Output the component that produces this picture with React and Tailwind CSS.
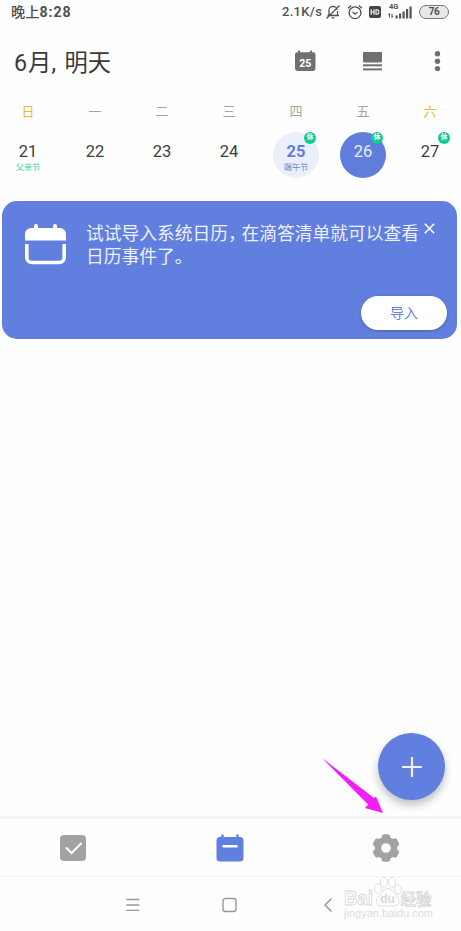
import React from "react";

const FONT = "font-['Roboto','Noto_Sans_CJK_SC',sans-serif]";

const DAYS = [
  { week: "日", date: "21", note: "父亲节", weekend: true },
  { week: "一", date: "22" },
  { week: "二", date: "23" },
  { week: "三", date: "24" },
  { week: "四", date: "25", note: "端午节", today: true, off: true },
  { week: "五", date: "26", selected: true, off: true },
  { week: "六", date: "27", weekend: true, off: true },
];

function StatusBar() {
  return (
    <div className="flex h-6 items-center justify-between pl-[11px] pr-[12px] text-[#505050]">
      <span className="whitespace-nowrap text-[14.2px] leading-6 font-medium">
        晚上<span className="tracking-[0.95px] font-bold">8:28</span>
      </span>
      <div className="flex items-center">
        <span className="w-[43px] whitespace-nowrap text-[13px] leading-6 font-medium tracking-[0.3px]">2.1K/s</span>
        {/* muted bell */}
        <svg className="h-4 w-4" viewBox="0 0 16 16" fill="none" stroke="currentColor" strokeWidth="1.3">
          <path d="M2.5 11.5H14M4 11V7a4 4 0 0 1 8-1.2M12.5 7v4.3M1.5 14.5l13-13M6.5 13.8h3M7 2.6h2" />
        </svg>
        <svg className="ml-[6px] h-4 w-4" viewBox="0 0 16 16" fill="none" stroke="currentColor" strokeWidth="1.3">
          <circle cx="8" cy="8.7" r="5.9" />
          <path d="M1 4.2 4.2 1.4M15 4.2l-3.2-2.8M5.5 8 8 10.2 10.5 8" />
        </svg>
        <svg className="ml-[6px] h-3 w-3" viewBox="0 0 12 12">
          <rect width="12" height="12" rx="2" fill="#444" />
          <path d="M2.2 3.2v5.6M5 3.2v5.6M2.2 6H5M7 3.8h1.2a1.6 1.6 0 0 1 1.6 1.7v1a1.6 1.6 0 0 1-1.6 1.7H7z" fill="none" stroke="#fff" strokeWidth="1.1" />
        </svg>
        <div className="relative ml-[7px] h-4 w-6">
          <span className="absolute left-[1px] -top-[1px] text-[7.5px] leading-[8px] font-bold">4G</span>
          <svg className="absolute inset-0 h-4 w-6" viewBox="0 0 24 16" fill="#555">
            <path d="M1.5 9.5v4M.3 11l1.2-1.500M4 9.5v4L5.200 12" stroke="#555" fill="none" />
            <rect x="7.5" y="11.500" width="2.2" height="3" />
            <rect x="11" y="9.500" width="2.2" height="5" />
            <rect x="14.5" y="7.500" width="2.2" height="7" />
            <rect x="18" y="5" width="2.2" height="9.500" />
            <rect x="21.5" y="2.500" width="2.2" height="12" />
          </svg>
        </div>
        <span className="ml-[7px] flex h-[14px] w-[30px] items-center justify-center rounded-full border-[1.5px] border-[#777] bg-[#e8e8e8] text-[10px] leading-none font-bold tracking-[-0.5px]">
          76
        </span>
      </div>
    </div>
  );
}

function Header() {
  return (
    <div className="flex h-[74px] items-center justify-between pl-[14px] pr-[20px] text-[#707070]">
      <h1 className="mt-[4px] whitespace-nowrap text-[23.3px] leading-[30px] text-[#3a3a3a]">
        6<span className="ml-[1px]">月,</span><span className="ml-[8.5px]">明天</span>
      </h1>
      <div className="flex items-center">
        <svg className="h-[22px] w-[22px]" viewBox="0 0 22 22" fill="currentColor">
          <path d="M4 .5h2v1.7h10V.5h2v1.7h1.300a2.200 2.200 0 0 1 2.200 2.200v14.200a2.400 2.400 0 0 1-2.400 2.400H3.400A2.400 2.400 0 0 1 1 18.600V4.400a2.200 2.200 0 0 1 2.200-2.200H4z" />
          <text x="11.3" y="16.6" textAnchor="middle" fill="#fff" fontFamily="Roboto" fontWeight="700" fontSize="10.5">25</text>
        </svg>
        <svg className="ml-[46px] h-5 w-5" viewBox="0 0 20 20" fill="currentColor">
          <rect x="1" y="1" width="19" height="10.5" rx="1" />
          <rect x="1" y="13.3" width="19" height="2" />
          <rect x="1" y="17.4" width="19" height="2" />
        </svg>
        <svg className="ml-[52px] h-[22px] w-[7px]" viewBox="0 0 7 22" fill="currentColor">
          <circle cx="3.5" cy="3.8" r="2.7" />
          <circle cx="3.5" cy="11.2" r="2.7" />
          <circle cx="3.5" cy="18.6" r="2.7" />
        </svg>
      </div>
    </div>
  );
}

function Day({ day }) {
  let circle = "text-[#3d3d3d]";
  if (day.today) circle = "bg-[#eaeffa] text-[#5f7edb]";
  if (day.selected) circle = "bg-[#5f7edb] text-[#e9eefb]";
  return (
    <div className="flex flex-col items-center">
      <span className={`h-[27px] text-[13px] leading-[27px] ${day.weekend ? "text-[#f5b921]" : "text-[#a5a5a5]"}`}>
        {day.week}
      </span>
      <div className={`relative mt-[7px] h-[46px] w-[46px] rounded-full text-center ${circle}`}>
        <div className={`pt-[9px] text-[16.5px] leading-[21px] ${day.today ? "font-bold" : ""}`}>{day.date}</div>
        {day.note && (
          <div className={`whitespace-nowrap text-[8.2px] leading-[10px] ${day.today ? "text-[#6682d4]" : "text-[#36cfa5]"}`}>
            {day.note}
          </div>
        )}
        {day.off && (
          <span className="absolute -top-[0.5px] left-[31px] flex h-3 w-3 items-center justify-center rounded-full bg-[#0ecb91] text-[7px] leading-none font-bold text-white">
            休
          </span>
        )}
      </div>
    </div>
  );
}

function ImportCard() {
  return (
    <div className="mr-[4px] ml-[2px] flex h-[138px] shrink-0 flex-col rounded-[15px] bg-[#617fde] text-[#edf1fc]">
      <div className="flex pl-[22px] pt-[22px]">
        <svg className="h-[43px] w-[43px]" viewBox="0 0 43 43" fill="#fff">
          <path d="M1 17.5V11a6 6 0 0 1 6-6h3V3a2 2 0 0 1 4 0v2h15V3a2 2 0 0 1 4 0v2h3a6 6 0 0 1 6 6v6.5z" />
          <path d="M2.8 21v13.5a5 5 0 0 0 5 5h27.4a5 5 0 0 0 5-5V21" fill="none" stroke="#fff" strokeWidth="3.6" />
        </svg>
        <p className="ml-[19px] whitespace-nowrap text-[17.75px] leading-[23px]">
          试试导入系统日历<span className="tracking-[-4.25px]">，</span>在滴答清单就可以查看
          <br />
          日历事件了。
        </p>
        <svg className="ml-[5px] h-[11px] w-[11px]" viewBox="0 0 11 11" fill="none" stroke="#fff" strokeWidth="1.6">
          <path d="m.8.8 9.4 9.4M10.2.8.8 10.2" />
        </svg>
      </div>
      <button className="mt-auto mr-[10px] mb-[9px] h-[34px] w-[86px] self-end rounded-full bg-white text-[14px] text-[#6682d4] shadow-[0_1px_3px_rgba(0,0,0,0.25)]">
        导入
      </button>
    </div>
  );
}

function TabBar() {
  return (
    <div className="flex h-[60px] shrink-0 items-center border-t-[3px] border-[#f5f5f5] pl-[60px]">
      <svg className="h-[26px] w-[26px]" viewBox="0 0 26 26">
        <rect width="26" height="26" rx="4" fill="#a2a2a2" />
        <path d="m6.5 13 5 5L21 8.5" fill="none" stroke="#fff" strokeWidth="2" strokeLinecap="round" />
      </svg>
      <svg className="ml-[129.5px] h-[28px] w-[28px]" viewBox="0 0 28 28">
        <path d="M5.3 1.5a1.2 1.2 0 0 1 2.4 0V3h12.6V1.5a1.2 1.2 0 0 1 2.4 0V3H24a3.5 3.5 0 0 1 3.5 3.5V24a3.5 3.5 0 0 1-3.5 3.5H4A3.5 3.5 0 0 1 .5 24V6.5A3.5 3.5 0 0 1 4 3h1.3z" fill="#617fde" />
        <path d="M7.5 12.3h13" stroke="#fff" strokeWidth="2.4" strokeLinecap="round" />
      </svg>
      <svg className="ml-[128px] h-[28px] w-[28px]" viewBox="0 0 28 28" fill="#a2a2a2">
        <circle cx="14" cy="14" r="11.2" />
        <rect x="9.7" y="0.3" width="8.6" height="27.4" rx="2.5" />
        <rect x="9.7" y="0.3" width="8.6" height="27.4" rx="2.5" transform="rotate(60 14 14)" />
        <rect x="9.7" y="0.3" width="8.6" height="27.4" rx="2.5" transform="rotate(120 14 14)" />
        <circle cx="14" cy="14" r="4.8" fill="#fff" />
      </svg>
    </div>
  );
}

function Watermark() {
  return (
    <svg className="absolute left-[342px] top-[-1px] h-[48px] w-[96px]" viewBox="0 0 96 48" fill="#fff" stroke="#d6d6d6" strokeWidth="0.8">
      <text x="2" y="29" fontFamily="Liberation Sans" fontWeight="700" fontSize="21" textLength="29" lengthAdjust="spacingAndGlyphs">Bai</text>
      <ellipse cx="36" cy="12.5" rx="3.5" ry="4.7" />
      <ellipse cx="41.8" cy="6.3" rx="3.5" ry="4.9" />
      <ellipse cx="50" cy="6.3" rx="3.5" ry="4.9" />
      <ellipse cx="56" cy="13.5" rx="3.5" ry="4.6" />
      <path d="M46 12.5c4 0 5 4 8 7 5 4 3.5 10.5-2.5 10.5-3 0-8-.5-11 0-7 .5-8-6-3.5-10 3.5-3.5 5-7.5 9-7.5z" />
      <text x="45.5" y="27" textAnchor="middle" fontFamily="Liberation Sans" fontWeight="700" fontSize="12" fill="#d9d9d9" stroke="none">du</text>
      <text x="58.5" y="29" fontFamily="Noto Sans CJK SC" fontWeight="500" fontSize="15.5" textLength="31" lengthAdjust="spacingAndGlyphs">经验</text>
      <text x="2" y="40.5" fontFamily="Liberation Sans" fontSize="10" fill="#dcdcdc" stroke="none" textLength="89" lengthAdjust="spacingAndGlyphs">jingyan.baidu.com</text>
    </svg>
  );
}

function SystemNav() {
  return (
    <div className="relative flex h-[55px] shrink-0 items-center border-t border-[#f3f3f3] pl-[125px] text-[#999]">
      <svg className="mt-[1px] h-4 w-4" viewBox="0 0 16 16" stroke="currentColor" strokeWidth="1.3">
        <path d="M1.3 2.5h13M1.3 8h13M1.3 13.3h13" />
      </svg>
      <svg className="mt-[1px] ml-[80px] h-4 w-4" viewBox="0 0 16 16" fill="none" stroke="currentColor" strokeWidth="1.4">
        <rect x="2" y="1.5" width="13" height="13" rx="2.5" />
      </svg>
      <svg className="mt-[1px] ml-[85px] h-4 w-3" viewBox="0 0 12 16" fill="none" stroke="currentColor" strokeWidth="1.5">
        <path d="M9.5 1.5 3 8l6.5 6.5" />
      </svg>
      <Watermark />
    </div>
  );
}

export default function App() {
  return (
    <div className={`relative flex h-[931px] w-[461px] flex-col overflow-hidden bg-[#fefefe] ${FONT}`}>
      <StatusBar />
      <Header />
      <div className="-ml-[5.5px] grid h-[103px] w-[469px] shrink-0 grid-cols-7">
        {DAYS.map((d) => (
          <Day key={d.date} day={d} />
        ))}
      </div>
      <ImportCard />
      <main className="flex-1" />
      <TabBar />
      <SystemNav />

      <button className="absolute left-[378px] top-[733px] flex h-[67px] w-[67px] items-center justify-center rounded-full bg-[#617fde] shadow-[0_5px_9px_rgba(0,0,0,0.25)]">
        <svg className="h-5 w-5" viewBox="0 0 20 20" stroke="#eef2fd" strokeWidth="2.2">
          <path d="M0 10h20M10 0v20" />
        </svg>
      </button>
      <svg className="absolute left-[322px] top-[758px] h-[56px] w-[62px]" viewBox="0 0 62 56" fill="#f51df5">
        <path d="M0 0 52 40 54 38.5 61 55 43 50 46 46.5z" />
      </svg>
    </div>
  );
}
